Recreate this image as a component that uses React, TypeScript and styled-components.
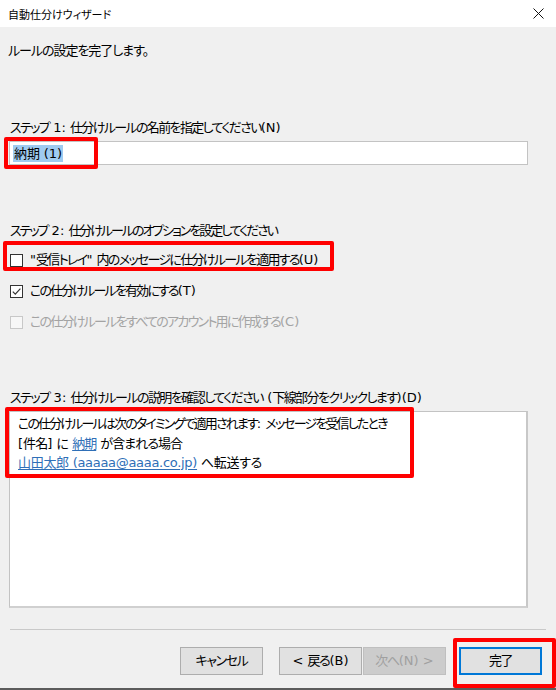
import React from "react";
import styled, { createGlobalStyle } from "styled-components";

const Global = createGlobalStyle`
  html, body { margin: 0; padding: 0; background: #f0f0f0; }
  body {
    font-family: "DejaVu Sans", "Noto Sans CJK JP", sans-serif;
    font-feature-settings: "palt";
    font-size: 13px;
    letter-spacing: -1.4px;
    color: #000;
  }
`;

const Latin = styled.span`
  letter-spacing: 0;
`;

const Mixed = ({ text }: { text: string }) => {
  const parts = text.split(/([\x20-\x7E]+)/);
  return (
    <>
      {parts.map((p, i) =>
        p === "" ? null : /^[\x20-\x7E]+$/.test(p) ? (
          <Latin key={i}>{p}</Latin>
        ) : (
          <React.Fragment key={i}>{p}</React.Fragment>
        )
      )}
    </>
  );
};

const Window = styled.div`
  position: relative;
  width: 556px;
  height: 690px;
  box-sizing: border-box;
  display: flex;
  flex-direction: column;
  background: #f0f0f0;
  border-bottom: 2px solid #5c5c5c;
`;

const TitleBar = styled.div`
  height: 27px;
  flex: none;
  background: #fff;
  display: flex;
  align-items: center;
  justify-content: space-between;
  padding: 0 12px 0 8px;
  font-family: "Noto Sans CJK JP", sans-serif;
  font-size: 11px;
  letter-spacing: 0;
  line-height: 16px;
`;

const Body = styled.div`
  flex: 1;
  display: flex;
  flex-direction: column;
  padding: 16px 0 0 0;
`;

const Text = styled.div<{ $ls: number }>`
  line-height: 16px;
  white-space: nowrap;
  letter-spacing: ${(p) => p.$ls}px;
`;

const Intro = styled(Text)`
  padding-left: 8px;
`;

const StepLabel = styled(Text)<{ $top: number }>`
  padding-left: 10px;
  margin-top: ${(p) => p.$top}px;
`;

const Field = styled.div`
  position: relative;
  margin: 5px 28px 0 9px;
  height: 24px;
  box-sizing: border-box;
  border: 1px solid #c3c3c3;
  background: #fff;
  display: flex;
  align-items: center;
  padding-left: 3px;
  letter-spacing: -0.1px;
`;

const Selected = styled.span`
  background: #9fcbf0;
  line-height: 17px;
  padding: 0 1px;
`;

const Highlight = styled.div<{ $l: number; $t: number; $w: number; $h: number }>`
  position: absolute;
  left: ${(p) => p.$l}px;
  top: ${(p) => p.$t}px;
  width: ${(p) => p.$w}px;
  height: ${(p) => p.$h}px;
  box-sizing: border-box;
  border: 4px solid #ff0000;
  border-radius: 2px;
  pointer-events: none;
`;

const Options = styled.div`
  display: flex;
  flex-direction: column;
  gap: 15px;
  margin-top: 13px;
  padding-left: 10px;
`;

const CheckRow = styled.label<{ $disabled?: boolean; $ls: number }>`
  position: relative;
  display: flex;
  align-items: center;
  gap: 7px;
  height: 16px;
  line-height: 16px;
  white-space: nowrap;
  letter-spacing: ${(p) => p.$ls}px;
  color: ${(p) => (p.$disabled ? "#a3a3a3" : "#000")};
`;

const Box = styled.span<{ $disabled?: boolean }>`
  width: 13px;
  height: 13px;
  flex: none;
  box-sizing: border-box;
  border: 1px solid ${(p) => (p.$disabled ? "#c8c8c8" : "#333")};
  background: ${(p) => (p.$disabled ? "#f7f7f7" : "#fff")};
  display: flex;
  align-items: center;
  justify-content: center;
`;

const Description = styled.div`
  position: relative;
  margin: 5px 28px 0 9px;
  height: 197px;
  box-sizing: border-box;
  border: 1px solid #c3c3c3;
  border-right: 2px solid #c8c8c8;
  border-bottom: 2px solid #d0d0d0;
  background: #fff;
  padding: 2px 0 0 8px;
`;

const Line = styled.div<{ $ls: number }>`
  line-height: 19.5px;
  white-space: nowrap;
  letter-spacing: ${(p) => p.$ls}px;
`;

const Link = styled.span`
  color: #2f6fb7;
  text-decoration: underline;
  text-underline-offset: 2px;
`;

const Separator = styled.div`
  margin: 21px 10px 0 10px;
  height: 1px;
  background: #c9c9c9;
`;

const ButtonRow = styled.div`
  display: flex;
  justify-content: flex-end;
  align-items: center;
  margin-top: 17px;
  padding-right: 14px;
`;

const Button = styled.div<{ $gap?: number; $variant?: "default" | "disabled" | "primary" }>`
  position: relative;
  width: 83px;
  height: 28px;
  box-sizing: border-box;
  margin-left: ${(p) => p.$gap ?? 0}px;
  display: flex;
  align-items: center;
  justify-content: center;
  line-height: 16px;
  white-space: pre;
  letter-spacing: -1.4px;
  background: ${(p) => (p.$variant === "disabled" ? "#cccccc" : "#e1e1e1")};
  border: ${(p) =>
    p.$variant === "primary"
      ? "2px solid #0078d7"
      : p.$variant === "disabled"
      ? "1px solid #bfbfbf"
      : "1px solid #adadad"};
  color: ${(p) => (p.$variant === "disabled" ? "#a0a0a0" : "#000")};
`;

const CloseIcon = () => (
  <svg width="11" height="11" viewBox="0 0 11 11">
    <path d="M0.5 0.5 L10.5 10.5 M10.5 0.5 L0.5 10.5" stroke="#111" strokeWidth="1" fill="none" />
  </svg>
);

const Check = () => (
  <svg width="11" height="11" viewBox="0 0 11 11">
    <path d="M1.8 5.6 L4.3 8.1 L9.4 2.6" stroke="#333" strokeWidth="1.2" fill="none" />
  </svg>
);

export default function App() {
  return (
    <>
      <Global />
      <Window>
        <TitleBar>
          <span>自動仕分けウィザード</span>
          <CloseIcon />
        </TitleBar>
        <Body>
          <Intro $ls={-1.05}>ルールの設定を完了します。</Intro>

          <StepLabel $top={61} $ls={-1.65}>
            <Mixed text="ステップ 1: 仕分けルールの名前を指定してください(N)" />
          </StepLabel>
          <Field>
            <Selected>納期 (1)</Selected>
            <Highlight $l={-6} $t={-5} $w={94} $h={32} />
          </Field>

          <StepLabel $top={58} $ls={-2.05}>
            <Mixed text="ステップ 2: 仕分けルールのオプションを設定してください" />
          </StepLabel>
          <Options>
            <CheckRow $ls={-1.7}>
              <Box />
              <span>
                <Mixed text={'"受信トレイ" 内のメッセージに仕分けルールを適用する(U)'} />
              </span>
              <Highlight $l={-7} $t={-11} $w={331} $h={30} />
            </CheckRow>
            <CheckRow $ls={-1.85}>
              <Box>
                <Check />
              </Box>
              <span>
                <Mixed text="この仕分けルールを有効にする(T)" />
              </span>
            </CheckRow>
            <CheckRow $disabled $ls={-1.75}>
              <Box $disabled />
              <span>
                <Mixed text="この仕分けルールをすべてのアカウント用に作成する(C)" />
              </span>
            </CheckRow>
          </Options>

          <StepLabel $top={60} $ls={-1.55}>
            <Mixed text="ステップ 3: 仕分けルールの説明を確認してください (下線部分をクリックします)(D)" />
          </StepLabel>
          <Description>
            <Line $ls={-1.85}>
              <Mixed text="この仕分けルールは次のタイミングで適用されます: メッセージを受信したとき" />
            </Line>
            <Line $ls={-0.95}>
              <Mixed text="[件名] に " />
              <Link>納期</Link>
              <Mixed text=" が含まれる場合" />
            </Line>
            <Line $ls={-0.3}>
              <Link>山田太郎 (aaaaa@aaaa.co.jp)</Link> へ転送する
            </Line>
            <Highlight $l={-5} $t={-5} $w={409} $h={71} />
          </Description>

          <Separator />
          <ButtonRow>
            <Button>キャンセル</Button>
            <Button $gap={16}>
              <Mixed text="< 戻る(B)" />
            </Button>
            <Button $gap={1} $variant="disabled">
              <Mixed text="次へ(N) >" />
            </Button>
            <Button $gap={13} $variant="primary">
              完了
              <Highlight $l={-8} $t={-11} $w={103} $h={50} />
            </Button>
          </ButtonRow>
        </Body>
      </Window>
    </>
  );
}
